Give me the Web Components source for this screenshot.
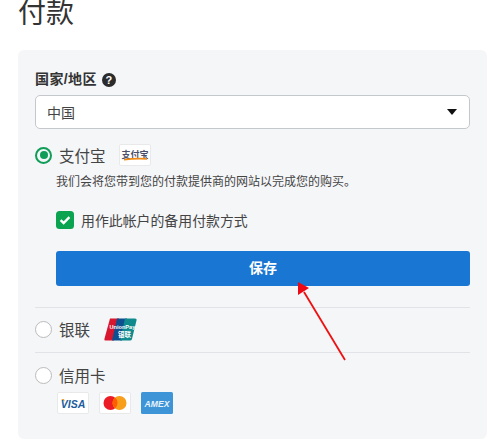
<!DOCTYPE html>
<html lang="zh">
<head>
<meta charset="utf-8">
<title>付款</title>
<style>
  html, body { margin: 0; padding: 0; background: #fff; overflow: hidden; }
  body { font-family: "Liberation Sans", "Noto Sans CJK SC", sans-serif; color: #333; }
</style>
</head>
<body>
<pay-page>
  <pay-field label="国家/地区"><pay-select value="中国"></pay-select></pay-field>

  <pay-option label="支付宝" checked style="--option-top: 14px">
    <pay-logo slot="logo" kind="alipay"></pay-logo>
    <pay-note>我们会将您带到您的付款提供商的网站以完成您的购买。</pay-note>
    <pay-check>用作此帐户的备用付款方式</pay-check>
    <pay-button>保存</pay-button>
  </pay-option>

  <pay-divider style="--gap-top: 21px; --gap-bottom: 9px"></pay-divider>

  <pay-option label="银联" style="--logo-gap: 14px">
    <pay-logo slot="logo" kind="unionpay"></pay-logo>
  </pay-option>

  <pay-divider style="--gap-top: 11px; --gap-bottom: 10px"></pay-divider>

  <pay-option label="信用卡">
    <pay-cards>
      <pay-logo kind="visa"></pay-logo>
      <pay-logo kind="mastercard"></pay-logo>
      <pay-logo kind="amex"></pay-logo>
    </pay-cards>
  </pay-option>
</pay-page>

<script>
// ----------------------------
// Page: title, grey card, red arrow
// ----------------------------

class PayPage extends HTMLElement {
  constructor() {
    super();
    const shadow = this.attachShadow({ mode: "open" });
    shadow.innerHTML = `
<style>
:host { display: block; position: relative; height: 445px; padding: 0 13px 0 18px; box-sizing: border-box; }
h1 { margin: 0; font-size: 28px; font-weight: 400; line-height: 28px; height: 50px; color: #333; }
.card { background: #f5f6f8; border-radius: 6px; height: 389px; padding: 20px 17px 0; box-sizing: border-box; }
svg { position: absolute; left: 285px; top: 270px; }
</style>
<h1>付款</h1>
<div class="card"><slot></slot></div>
<svg width="70" height="100" viewBox="285 270 70 100" aria-hidden="true">
  <line x1="345" y1="360" x2="304" y2="292" stroke="#ee1111" stroke-width="1.8"/>
  <polygon points="298,282 309,288 298,295" fill="#ee0a14"/>
</svg>`;
  }
}
customElements.define("pay-page", PayPage);

// ----------------------------
// Country field
// ----------------------------

class PayField extends HTMLElement {
  constructor() {
    super();
    const shadow = this.attachShadow({ mode: "open" });
    shadow.innerHTML = `
<style>
:host { display: block; }
.label { display: flex; align-items: center; gap: 5px; height: 18px; margin-bottom: 7px; font-size: 14px; font-weight: 700; color: #333; letter-spacing: .4px; }
#text { margin-top: -2px; }
.help { width: 14px; height: 14px; border-radius: 50%; background: #2b2b2b; color: #fff; font-size: 11px; font-weight: 700; line-height: 14px; text-align: center; margin-top: 2px; letter-spacing: 0; }
</style>
<div class="label"><span id="text"></span><span class="help">?</span></div>
<slot></slot>`;
    shadow.getElementById("text").textContent = this.getAttribute("label");
  }
}
customElements.define("pay-field", PayField);

class PaySelect extends HTMLElement {
  constructor() {
    super();
    const shadow = this.attachShadow({ mode: "open" });
    shadow.innerHTML = `
<style>
:host { display: flex; align-items: center; justify-content: space-between; height: 34px; box-sizing: border-box; padding: 0 12px 0 11px; background: #fff; border: 1px solid #c4c8cc; border-radius: 5px; font-size: 14px; color: #444; }
i { width: 0; height: 0; border: 5px solid transparent; border-top: 6px solid #111; border-bottom: 0; }
</style>
<span id="value"></span><i></i>`;
    shadow.getElementById("value").textContent = this.getAttribute("value");
  }
}
customElements.define("pay-select", PaySelect);

// ----------------------------
// Payment option with radio
// ----------------------------

class PayOption extends HTMLElement {
  constructor() {
    super();
    const shadow = this.attachShadow({ mode: "open" });
    shadow.innerHTML = `
<style>
:host { display: block; margin-top: var(--option-top, 0); }
.row { display: flex; align-items: center; height: 24px; }
.radio { width: 17px; height: 17px; box-sizing: border-box; border-radius: 50%; border: 1px solid #bbb; background: #fff; flex: none; position: relative; }
:host([checked]) .radio { border: 2px solid #0f9d58; background: #f5f6f8; }
:host([checked]) .radio::after { content: ""; position: absolute; left: 2.5px; top: 2.5px; width: 8px; height: 8px; border-radius: 50%; background: #0f9d58; }
.name { font-size: 15.5px; color: #444; margin-left: 7px; margin-right: var(--logo-gap, 13.5px); }
.body { padding-left: 21px; }
</style>
<div class="row"><span class="radio"></span><span class="name" id="name"></span><slot name="logo"></slot></div>
<div class="body"><slot></slot></div>`;
    shadow.getElementById("name").textContent = this.getAttribute("label");
  }
}
customElements.define("pay-option", PayOption);

class PayNote extends HTMLElement {
  constructor() {
    super();
    const shadow = this.attachShadow({ mode: "open" });
    shadow.innerHTML = `
<style>
:host { display: block; margin-top: 6px; font-size: 12px; line-height: 18px; color: #444; }
</style>
<slot></slot>`;
  }
}
customElements.define("pay-note", PayNote);

class PayCheck extends HTMLElement {
  constructor() {
    super();
    const shadow = this.attachShadow({ mode: "open" });
    shadow.innerHTML = `
<style>
:host { display: flex; align-items: center; gap: 7px; height: 18px; margin-top: 20px; font-size: 13.9px; color: #444; }
svg { flex: none; }
</style>
<svg width="18" height="18" viewBox="0 0 18 18" aria-hidden="true">
  <rect width="18" height="18" rx="3.5" fill="#0aa34f"/>
  <path d="M4.6 9.2 7.6 12 13.4 6.2" fill="none" stroke="#fff" stroke-width="2.4"/>
</svg>
<slot></slot>`;
  }
}
customElements.define("pay-check", PayCheck);

class PayButton extends HTMLElement {
  constructor() {
    super();
    const shadow = this.attachShadow({ mode: "open" });
    shadow.innerHTML = `
<style>
:host { display: flex; align-items: center; justify-content: center; height: 35px; box-sizing: border-box; padding-bottom: 3px; margin-top: 22px; background: #1976d2; border-radius: 3px; color: #fff; font-size: 14px; font-weight: 700; }
</style>
<slot></slot>`;
  }
}
customElements.define("pay-button", PayButton);

class PayDivider extends HTMLElement {
  constructor() {
    super();
    const shadow = this.attachShadow({ mode: "open" });
    shadow.innerHTML = `
<style>
:host { display: block; height: 1px; background: #e1e3e6; margin: var(--gap-top) 0 var(--gap-bottom); }
</style>`;
  }
}
customElements.define("pay-divider", PayDivider);

class PayCards extends HTMLElement {
  constructor() {
    super();
    const shadow = this.attachShadow({ mode: "open" });
    shadow.innerHTML = `
<style>
:host { display: flex; gap: 10px; margin-top: 5px; padding-left: 1px; }
</style>
<slot></slot>`;
  }
}
customElements.define("pay-cards", PayCards);

// ----------------------------
// Brand logos
// ----------------------------

const LOGOS = {
  alipay: `<svg width="32" height="22" viewBox="0 0 32 22">
    <rect x=".5" y=".5" width="31" height="21" rx="1.5" fill="#fff" stroke="#e9e9e9"/>
    <text x="16" y="14" font-size="9" font-weight="700" text-anchor="middle" fill="#4a4f6a" font-family="Noto Sans CJK SC, sans-serif">支付宝</text>
    <path d="M5 15 Q16 13 28 14 L28 15.8 Q16 15.2 5 16.6Z" fill="#f08a14"/>
  </svg>`,
  unionpay: `<svg width="33" height="23" viewBox="0 0 33 23">
    <path d="M6 .5H15L10 22.5H1.5Q0 22.5 .4 21Z" fill="#d8172f"/>
    <path d="M13 .5H23L18 22.5H8Z" fill="#0d4f8f"/>
    <path d="M21 .5H31Q33 .5 32.6 2L28 21Q27.6 22.5 26 22.5H16Z" fill="#0f8b8d"/>
    <text x="5.5" y="11" font-size="5.6" font-weight="700" fill="#fff" font-family="Liberation Sans, sans-serif">UnionPay</text>
    <text x="14" y="19" font-size="6.5" font-weight="700" fill="#fff" font-family="Noto Sans CJK SC, sans-serif">银联</text>
  </svg>`,
  visa: `<svg width="32" height="22" viewBox="0 0 32 22">
    <rect x=".5" y=".5" width="31" height="21" rx="1.5" fill="#fff" stroke="#e9e9e9"/>
    <path d="M4 7h3l1 2.4Z" fill="#e8a33a"/>
    <text x="16" y="15.5" font-size="10.5" font-weight="700" font-style="italic" text-anchor="middle" fill="#1a5c9e" font-family="Liberation Sans, sans-serif">VISA</text>
  </svg>`,
  mastercard: `<svg width="32" height="22" viewBox="0 0 32 22">
    <rect x=".5" y=".5" width="31" height="21" rx="1.5" fill="#fff" stroke="#e9e9e9"/>
    <circle cx="11.5" cy="11" r="7" fill="#eb1c26"/>
    <circle cx="20.5" cy="11" r="7" fill="#f79e1b"/>
    <path d="M16 5.6a7 7 0 0 1 0 10.8a7 7 0 0 1 0-10.8Z" fill="#ff5f00"/>
  </svg>`,
  amex: `<svg width="32" height="22" viewBox="0 0 32 22">
    <rect width="32" height="22" rx="1.5" fill="#3d95d8"/>
    <text x="16" y="14.5" font-size="8.6" font-weight="700" font-style="italic" text-anchor="middle" fill="#e8f3fb" font-family="Liberation Sans, sans-serif">AMEX</text>
  </svg>`,
};

class PayLogo extends HTMLElement {
  constructor() {
    super();
    const shadow = this.attachShadow({ mode: "open" });
    shadow.innerHTML = `
<style>
:host { display: inline-flex; }
svg { display: block; }
</style>
${LOGOS[this.getAttribute("kind")]}`;
  }
}
customElements.define("pay-logo", PayLogo);
</script>
</body>
</html>
